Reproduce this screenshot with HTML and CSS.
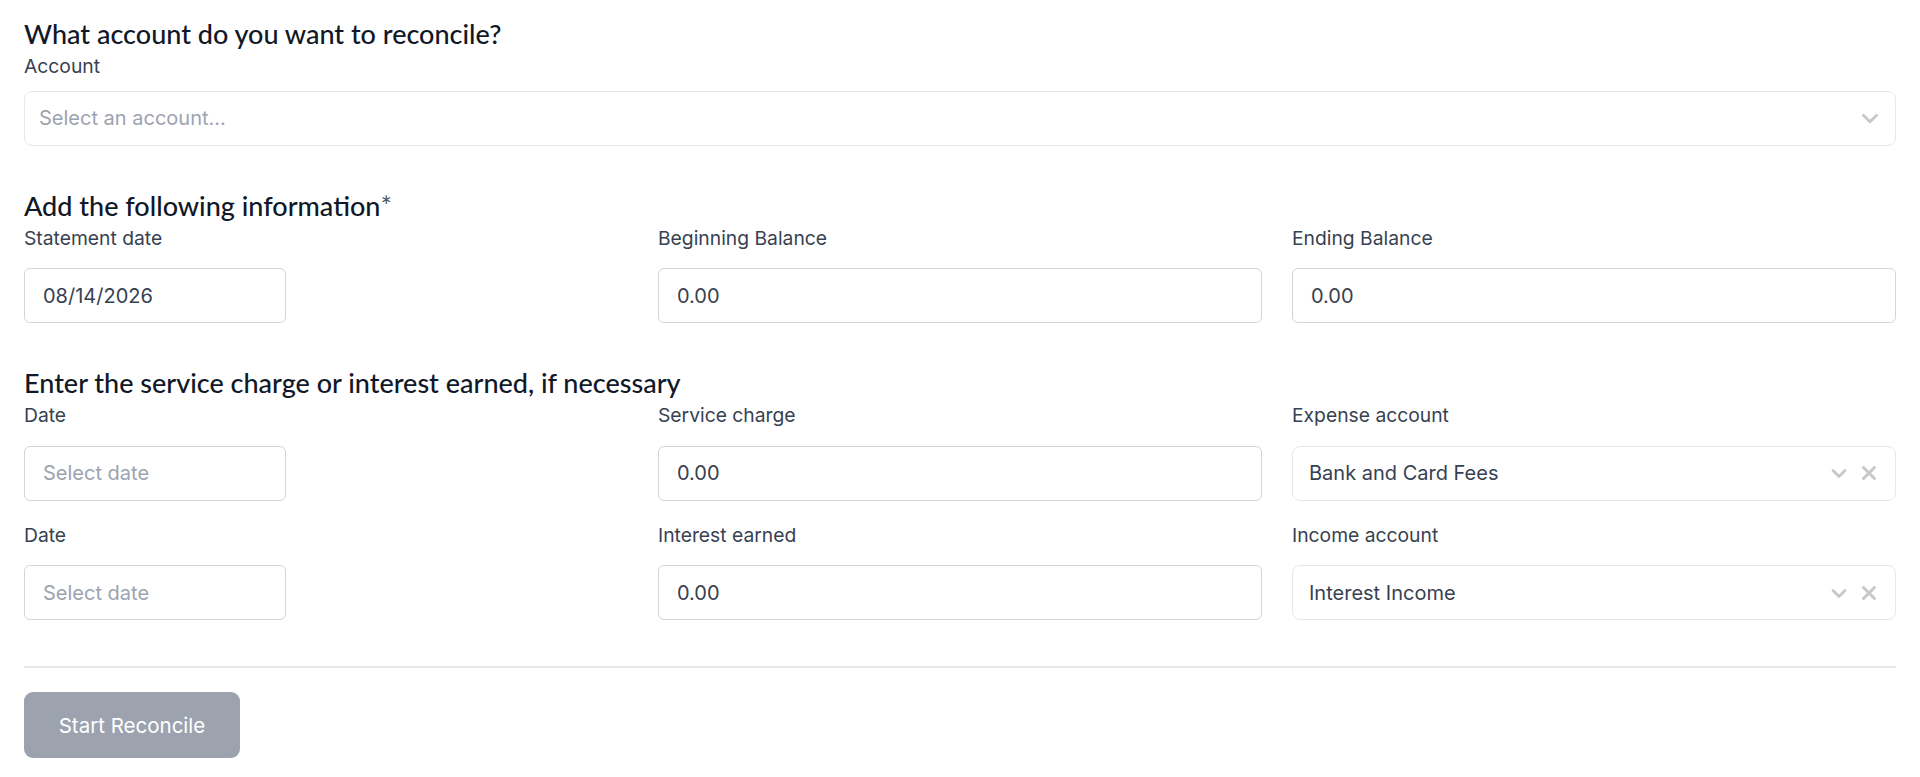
FILE: index.html
```html
<!DOCTYPE html>
<html lang="en">
<head>
    <meta charset="UTF-8">
    <meta name="viewport" content="width=device-width, initial-scale=1.0">
    <title>Reconcile</title>
    <link rel="stylesheet" href="styles.css">
</head>
<body>
    <div class="page">
        <!-- Account selection -->
        <section class="section">
            <h2 class="section-title">What account do you want to reconcile?</h2>
            <div class="field field-single">
                <label class="field-label">Account</label>
                <div class="select select-wide">
                    <span class="placeholder">Select an account...</span>
                    <span class="select-icons">
                        <svg class="chevron" viewBox="0 0 20 20" width="22" height="22"><path d="M4 7.5l6 6 6-6" fill="none" stroke="currentColor" stroke-width="2.6" stroke-linecap="round" stroke-linejoin="round"/></svg>
                    </span>
                </div>
            </div>
        </section>

        <!-- Statement info -->
        <section class="section">
            <h2 class="section-title">Add the following information<span class="required">*</span></h2>
            <div class="grid">
                <div class="field">
                    <label class="field-label">Statement date</label>
                    <div class="input input-date">08/14/2026</div>
                </div>
                <div class="field">
                    <label class="field-label">Beginning Balance</label>
                    <div class="input">0.00</div>
                </div>
                <div class="field">
                    <label class="field-label">Ending Balance</label>
                    <div class="input">0.00</div>
                </div>
            </div>
        </section>

        <!-- Service charge / interest -->
        <section class="section section-last">
            <h2 class="section-title">Enter the service charge or interest earned, if necessary</h2>
            <div class="grid grid-rows">
                <div class="field">
                    <label class="field-label">Date</label>
                    <div class="input input-date placeholder">Select date</div>
                </div>
                <div class="field">
                    <label class="field-label">Service charge</label>
                    <div class="input">0.00</div>
                </div>
                <div class="field">
                    <label class="field-label">Expense account</label>
                    <div class="select">
                        <span>Bank and Card Fees</span>
                        <span class="select-icons">
                            <svg class="chevron" viewBox="0 0 20 20" width="20" height="20"><path d="M4 7.5l6 6 6-6" fill="none" stroke="currentColor" stroke-width="2.8" stroke-linecap="round" stroke-linejoin="round"/></svg>
                            <svg class="clear" viewBox="0 0 20 20" width="20" height="20"><path d="M4.5 4.5l11 11M15.5 4.5l-11 11" fill="none" stroke="currentColor" stroke-width="3" stroke-linecap="round"/></svg>
                        </span>
                    </div>
                </div>
                <div class="field">
                    <label class="field-label">Date</label>
                    <div class="input input-date placeholder">Select date</div>
                </div>
                <div class="field">
                    <label class="field-label">Interest earned</label>
                    <div class="input">0.00</div>
                </div>
                <div class="field">
                    <label class="field-label">Income account</label>
                    <div class="select">
                        <span>Interest Income</span>
                        <span class="select-icons">
                            <svg class="chevron" viewBox="0 0 20 20" width="20" height="20"><path d="M4 7.5l6 6 6-6" fill="none" stroke="currentColor" stroke-width="2.8" stroke-linecap="round" stroke-linejoin="round"/></svg>
                            <svg class="clear" viewBox="0 0 20 20" width="20" height="20"><path d="M4.5 4.5l11 11M15.5 4.5l-11 11" fill="none" stroke="currentColor" stroke-width="3" stroke-linecap="round"/></svg>
                        </span>
                    </div>
                </div>
            </div>
        </section>

        <div class="footer">
            <button class="start-button">Start Reconcile</button>
        </div>
    </div>
</body>
</html>
```

FILE: styles.css
```css
body {
    margin: 0;
    background: #fff;
    font-family: Inter, "Noto Sans", sans-serif;
    color: #374151;
}

.page {
    padding: 18px 24px 20px;
}

/* Section headings */
.section {
    margin-bottom: 44px;
}

.section-last {
    margin-bottom: 46px;
}

.section-title {
    margin: 0 0 4px;
    font-family: Lato, "Noto Sans", sans-serif;
    font-size: 27px;
    font-weight: 500;
    color: #111827;
    line-height: 32px;
}

.required {
    font-weight: 400;
    color: #4b5563;
}

/* Fields */
.grid {
    display: grid;
    grid-template-columns: 1fr 1fr 1fr;
    column-gap: 30px;
}

.grid-rows {
    row-gap: 22px;
}

.field {
    display: flex;
    flex-direction: column;
}

.field-label {
    font-size: 19.3px;
    line-height: 24px;
    color: #374151;
    margin-bottom: 18.5px;
}

.field-single .field-label {
    margin-bottom: 12.5px;
}

.input {
    height: 55px;
    box-sizing: border-box;
    border: 1px solid #d1d5db;
    border-radius: 6px;
    padding: 0 18px;
    display: flex;
    align-items: center;
    font-size: 20px;
    color: #374151;
}

.input-date {
    width: 262px;
}

.placeholder {
    color: #9ca3af;
}

.select {
    height: 55px;
    box-sizing: border-box;
    border: 1px solid #e5e7eb;
    border-radius: 8px;
    padding: 0 16px;
    display: flex;
    align-items: center;
    justify-content: space-between;
    font-size: 20px;
    color: #374151;
}

.select-wide .placeholder {
    margin-left: -2px;
}

.select-wide .select-icons {
    margin-right: -2px;
}

.select-icons {
    display: flex;
    align-items: center;
    gap: 10px;
    color: #c8c8c8;
}

/* Footer */
.footer {
    border-top: 2px solid #e5e7eb;
    padding-top: 24px;
}

.start-button {
    width: 216px;
    height: 66px;
    border: none;
    border-radius: 9px;
    background-color: #9ca3af;
    color: #fff;
    font-family: Inter, "Noto Sans", sans-serif;
    font-size: 20.5px;
}
```
